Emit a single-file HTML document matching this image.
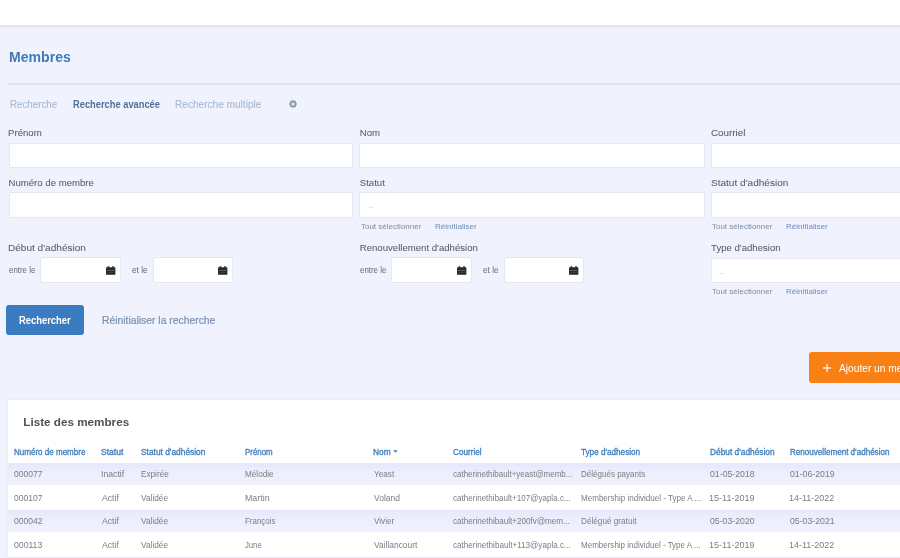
<!DOCTYPE html>
<html><head><meta charset="utf-8">
<style>
*{box-sizing:border-box;margin:0;padding:0}
html,body{width:900px;height:558px;overflow:hidden;background:#f0f3fd;font-family:"Liberation Sans",sans-serif;position:relative}
.abs{position:absolute;white-space:nowrap;transform-origin:0 50%;line-height:1.15}
#wrap{position:absolute;left:0;top:0;width:930px;height:590px;overflow:hidden;filter:blur(0.35px)}
.inp{position:absolute;background:#fff;border:1px solid #e5e8f2;border-radius:1px}
</style></head><body>
<div id="wrap">
<div style="position:absolute;left:0;top:0;width:930px;height:25.5px;background:#fff;border-bottom:1.5px solid #e0e3ee;box-shadow:0 1.5px 2px rgba(40,50,120,0.05)"></div>
<div style="position:absolute;left:8px;top:83.2px;width:922px;height:1.7px;background:#e1e4f0"></div>
<svg style="position:absolute;left:288.5px;top:100px" width="8" height="8" viewBox="0 0 8 8"><g fill="#8b9fae"><circle cx="4" cy="4" r="2.9"/><rect x="3.2" y="0" width="1.6" height="8" transform="rotate(0 4 4)"/><rect x="3.2" y="0" width="1.6" height="8" transform="rotate(45 4 4)"/><rect x="3.2" y="0" width="1.6" height="8" transform="rotate(90 4 4)"/><rect x="3.2" y="0" width="1.6" height="8" transform="rotate(135 4 4)"/></g><circle cx="4" cy="4" r="1.5" fill="#e4ecf0"/></svg>
<div class="inp" style="left:8.8px;top:142.6px;width:344.4px;height:25.4px"></div>
<div class="inp" style="left:359px;top:142.6px;width:345.6px;height:25.4px"></div>
<div class="inp" style="left:710.8px;top:142.6px;width:345px;height:25.4px"></div>
<div class="inp" style="left:8.8px;top:192.4px;width:344.4px;height:25.4px"></div>
<div class="inp" style="left:359px;top:192.4px;width:345.6px;height:25.4px"></div>
<div class="inp" style="left:710.8px;top:192.4px;width:345px;height:25.4px"></div>
<div class="inp" style="left:40.1px;top:257.3px;width:80.7px;height:25.5px"></div>
<div class="inp" style="left:153px;top:257.3px;width:80px;height:25.5px"></div>
<svg style="position:absolute;left:105.6px;top:266px" width="10" height="9" viewBox="0 0 10 9"><rect x="0" y="1.2" width="9.4" height="7.6" rx="0.6" fill="#2a2a2e"/><rect x="1.6" y="0.2" width="1.6" height="1.6" fill="#2a2a2e"/><rect x="6.2" y="0.2" width="1.6" height="1.6" fill="#2a2a2e"/><rect x="1" y="4.3" width="7.4" height="0.7" fill="#6d6d72"/><rect x="1" y="6.5" width="7.4" height="0.5" fill="#4a4a4e"/></svg>
<svg style="position:absolute;left:217.8px;top:266px" width="10" height="9" viewBox="0 0 10 9"><rect x="0" y="1.2" width="9.4" height="7.6" rx="0.6" fill="#2a2a2e"/><rect x="1.6" y="0.2" width="1.6" height="1.6" fill="#2a2a2e"/><rect x="6.2" y="0.2" width="1.6" height="1.6" fill="#2a2a2e"/><rect x="1" y="4.3" width="7.4" height="0.7" fill="#6d6d72"/><rect x="1" y="6.5" width="7.4" height="0.5" fill="#4a4a4e"/></svg>
<div class="inp" style="left:391.1px;top:257.3px;width:80.7px;height:25.5px"></div>
<div class="inp" style="left:504px;top:257.3px;width:80px;height:25.5px"></div>
<svg style="position:absolute;left:456.6px;top:266px" width="10" height="9" viewBox="0 0 10 9"><rect x="0" y="1.2" width="9.4" height="7.6" rx="0.6" fill="#2a2a2e"/><rect x="1.6" y="0.2" width="1.6" height="1.6" fill="#2a2a2e"/><rect x="6.2" y="0.2" width="1.6" height="1.6" fill="#2a2a2e"/><rect x="1" y="4.3" width="7.4" height="0.7" fill="#6d6d72"/><rect x="1" y="6.5" width="7.4" height="0.5" fill="#4a4a4e"/></svg>
<svg style="position:absolute;left:568.8px;top:266px" width="10" height="9" viewBox="0 0 10 9"><rect x="0" y="1.2" width="9.4" height="7.6" rx="0.6" fill="#2a2a2e"/><rect x="1.6" y="0.2" width="1.6" height="1.6" fill="#2a2a2e"/><rect x="6.2" y="0.2" width="1.6" height="1.6" fill="#2a2a2e"/><rect x="1" y="4.3" width="7.4" height="0.7" fill="#6d6d72"/><rect x="1" y="6.5" width="7.4" height="0.5" fill="#4a4a4e"/></svg>
<div class="inp" style="left:711px;top:257.6px;width:345px;height:25.8px"></div>
<div style="position:absolute;left:368.5px;top:206.8px;width:4px;height:1px;background:#e4e5ea"></div>
<div style="position:absolute;left:720px;top:273.3px;width:4px;height:1px;background:#e4e5ea"></div>
<div style="position:absolute;left:6px;top:305px;width:78px;height:29.5px;background:#3b7cc0;border-radius:3px"></div>
<div style="position:absolute;left:809px;top:352px;width:130px;height:30.5px;background:#f98015;border-radius:3px"></div>
<svg style="position:absolute;left:822.5px;top:364px" width="8" height="8"><rect x="3.4" y="0" width="1.2" height="8" fill="#fff"/><rect x="0" y="3.4" width="8" height="1.2" fill="#fff"/></svg>
<div style="position:absolute;left:8.3px;top:399.7px;width:900px;height:157.3px;background:#fff;box-shadow:0 0 4px rgba(60,70,140,0.06)"></div>
<div style="position:absolute;left:8.3px;top:556.6px;width:900px;height:1.4px;background:#e6eaf6"></div>
<div style="position:absolute;left:8.3px;top:462.8px;width:900px;height:22.4px;background:linear-gradient(#e5e8fa,#ebeefc 40%,#f0f2fd)"></div>
<div style="position:absolute;left:8.3px;top:509.5px;width:900px;height:22.5px;background:linear-gradient(#e5e8fa,#ebeefc 40%,#f0f2fd)"></div>
<svg style="position:absolute;left:392.8px;top:450px" width="5" height="4"><path d="M0.2 0.3 L4.6 0.3 L2.4 2.8 Z" fill="#3f78b4"/></svg>
<div class="abs" id="t0" style="left:9.01px;top:48.8px;font-size:14px;font-weight:bold;color:#4179b6;transform:scaleX(1.0050)">Membres</div>
<div class="abs" id="t1" style="left:9.79px;top:99px;font-size:10px;color:#aabad2;-webkit-text-stroke:0.15px #aabad2;transform:scaleX(0.9739)">Recherche</div>
<div class="abs" id="t2" style="left:72.87px;top:99px;font-size:10.3px;font-weight:bold;color:#50709a;transform:scaleX(0.9043)">Recherche avancée</div>
<div class="abs" id="t3" style="left:174.77px;top:99px;font-size:10px;color:#aabad2;-webkit-text-stroke:0.15px #aabad2;transform:scaleX(1.0089)">Recherche multiple</div>
<div class="abs" id="t4" style="left:8.35px;top:127px;font-size:9.6px;color:#5b5c60;-webkit-text-stroke:0.05px #5b5c60;transform:scaleX(1.0048)">Prénom</div>
<div class="abs" id="t5" style="left:359.75px;top:127px;font-size:9.6px;color:#5b5c60;-webkit-text-stroke:0.05px #5b5c60">Nom</div>
<div class="abs" id="t6" style="left:710.95px;top:127px;font-size:9.6px;color:#5b5c60;-webkit-text-stroke:0.05px #5b5c60;transform:scaleX(1.0238)">Courriel</div>
<div class="abs" id="t7" style="left:8.54px;top:177px;font-size:9.6px;color:#5b5c60;-webkit-text-stroke:0.05px #5b5c60">Numéro de membre</div>
<div class="abs" id="t8" style="left:359.79px;top:177px;font-size:9.6px;color:#5b5c60;-webkit-text-stroke:0.05px #5b5c60">Statut</div>
<div class="abs" id="t9" style="left:710.77px;top:177px;font-size:9.6px;color:#5b5c60;-webkit-text-stroke:0.05px #5b5c60;transform:scaleX(1.0472)">Statut d'adhésion</div>
<div class="abs" id="t10" style="left:360.65px;top:221.8px;font-size:8px;color:#7d8ba3;transform:scaleX(0.9969)">Tout sélectionner</div>
<div class="abs" id="t11" style="left:434.81px;top:221.8px;font-size:8px;color:#6b8bbd;transform:scaleX(1.0082)">Réinitialiser</div>
<div class="abs" id="t12" style="left:711.65px;top:221.8px;font-size:8px;color:#7d8ba3;transform:scaleX(0.9969)">Tout sélectionner</div>
<div class="abs" id="t13" style="left:785.81px;top:221.8px;font-size:8px;color:#6b8bbd;transform:scaleX(1.0082)">Réinitialiser</div>
<div class="abs" id="t14" style="left:8.40px;top:242px;font-size:9.6px;color:#5b5c60;-webkit-text-stroke:0.05px #5b5c60;transform:scaleX(1.0477)">Début d'adhésion</div>
<div class="abs" id="t15" style="left:359.75px;top:242px;font-size:9.6px;color:#5b5c60;-webkit-text-stroke:0.05px #5b5c60">Renouvellement d'adhésion</div>
<div class="abs" id="t16" style="left:711.05px;top:242px;font-size:9.6px;color:#5b5c60;-webkit-text-stroke:0.05px #5b5c60">Type d'adhesion</div>
<div class="abs" id="t17" style="left:9.43px;top:265.6px;font-size:8.4px;color:#6a6b70;transform:scaleX(0.9424)">entre le</div>
<div class="abs" id="t18" style="left:132.03px;top:265.6px;font-size:8.4px;color:#6a6b70;transform:scaleX(0.9926)">et le</div>
<div class="abs" id="t19" style="left:360.43px;top:265.6px;font-size:8.4px;color:#6a6b70;transform:scaleX(0.9424)">entre le</div>
<div class="abs" id="t20" style="left:483.03px;top:265.6px;font-size:8.4px;color:#6a6b70;transform:scaleX(0.9926)">et le</div>
<div class="abs" id="t21" style="left:711.65px;top:287.3px;font-size:8px;color:#7d8ba3;transform:scaleX(0.9969)">Tout sélectionner</div>
<div class="abs" id="t22" style="left:785.81px;top:287.3px;font-size:8px;color:#6b8bbd;transform:scaleX(1.0082)">Réinitialiser</div>
<div class="abs" id="t23" style="left:19.24px;top:314.6px;font-size:10px;font-weight:bold;color:#fff;transform:scaleX(0.9377)">Rechercher</div>
<div class="abs" id="t24" style="left:102.17px;top:314.6px;font-size:10px;color:#7b90ae;-webkit-text-stroke:0.2px #7b90ae;transform:scaleX(1.0350)">Réinitialiser la recherche</div>
<div class="abs" id="t25" style="left:838.55px;top:362px;font-size:10.5px;color:#fff;transform:scaleX(0.97)">Ajouter un membre</div>
<div class="abs" id="t26" style="left:23.26px;top:415px;font-size:11.7px;font-weight:bold;color:#4f5157">Liste des membres</div>
<div class="abs" id="t27" style="left:13.99px;top:447.5px;font-size:8.3px;color:#3f7dbf;-webkit-text-stroke:0.3px #3f7dbf;transform:scaleX(0.9679)">Numéro de membre</div>
<div class="abs" id="t28" style="left:101.45px;top:447.5px;font-size:8.3px;color:#3f7dbf;-webkit-text-stroke:0.3px #3f7dbf;transform:scaleX(1.0270)">Statut</div>
<div class="abs" id="t29" style="left:141.26px;top:447.5px;font-size:8.3px;color:#3f7dbf;-webkit-text-stroke:0.3px #3f7dbf;transform:scaleX(1.0082)">Statut d'adhésion</div>
<div class="abs" id="t30" style="left:245.01px;top:447.5px;font-size:8.3px;color:#3f7dbf;-webkit-text-stroke:0.3px #3f7dbf;transform:scaleX(0.9530)">Prénom</div>
<div class="abs" id="t31" style="left:373.12px;top:447.5px;font-size:8.3px;color:#3f7dbf;-webkit-text-stroke:0.3px #3f7dbf">Nom</div>
<div class="abs" id="t32" style="left:453.12px;top:447.5px;font-size:8.3px;color:#3f7dbf;-webkit-text-stroke:0.3px #3f7dbf;transform:scaleX(0.9841)">Courriel</div>
<div class="abs" id="t33" style="left:581.26px;top:447.5px;font-size:8.3px;color:#3f7dbf;-webkit-text-stroke:0.3px #3f7dbf;transform:scaleX(0.9823)">Type d'adhesion</div>
<div class="abs" id="t34" style="left:709.97px;top:447.5px;font-size:8.3px;color:#3f7dbf;-webkit-text-stroke:0.3px #3f7dbf;transform:scaleX(1.0046)">Début d'adhésion</div>
<div class="abs" id="t35" style="left:789.59px;top:447.5px;font-size:8.3px;color:#3f7dbf;-webkit-text-stroke:0.3px #3f7dbf;transform:scaleX(0.9736)">Renouvellement d'adhésion</div>
<div class="abs" id="t36" style="left:13.99px;top:469.0px;font-size:9px;color:#7c7d81;transform:scaleX(0.9472)">000077</div>
<div class="abs" id="t37" style="left:101.09px;top:469.0px;font-size:9px;color:#7c7d81;transform:scaleX(0.9634)">Inactif</div>
<div class="abs" id="t38" style="left:141.01px;top:469.0px;font-size:9px;color:#7c7d81;transform:scaleX(0.9088)">Expirée</div>
<div class="abs" id="t39" style="left:244.82px;top:469.0px;font-size:9px;color:#7c7d81;transform:scaleX(0.9053)">Mélodie</div>
<div class="abs" id="t40" style="left:373.73px;top:469.0px;font-size:9px;color:#7c7d81;transform:scaleX(0.9093)">Yeast</div>
<div class="abs" id="t41" style="left:453.00px;top:469.0px;font-size:9px;color:#7c7d81;transform:scaleX(0.8883)">catherinethibault+yeast@memb...</div>
<div class="abs" id="t42" style="left:580.81px;top:469.0px;font-size:9px;color:#7c7d81;transform:scaleX(0.8917)">Délégués payants</div>
<div class="abs" id="t43" style="left:709.99px;top:469.0px;font-size:9px;color:#7c7d81;transform:scaleX(0.9709)">01-05-2018</div>
<div class="abs" id="t44" style="left:789.59px;top:469.0px;font-size:9px;color:#7c7d81;transform:scaleX(0.9695)">01-06-2019</div>
<div class="abs" id="t45" style="left:13.99px;top:492.5px;font-size:9px;color:#7c7d81;transform:scaleX(0.9472)">000107</div>
<div class="abs" id="t46" style="left:102.08px;top:492.5px;font-size:9px;color:#7c7d81;transform:scaleX(0.9605)">Actif</div>
<div class="abs" id="t47" style="left:141.28px;top:492.5px;font-size:9px;color:#7c7d81;transform:scaleX(0.9221)">Validée</div>
<div class="abs" id="t48" style="left:244.78px;top:492.5px;font-size:9px;color:#7c7d81;transform:scaleX(0.9817)">Martin</div>
<div class="abs" id="t49" style="left:373.88px;top:492.5px;font-size:9px;color:#7c7d81;transform:scaleX(0.9410)">Voland</div>
<div class="abs" id="t50" style="left:453.00px;top:492.5px;font-size:9px;color:#7c7d81;transform:scaleX(0.8946)">catherinethibault+107@yapla.c...</div>
<div class="abs" id="t51" style="left:580.84px;top:492.5px;font-size:9px;color:#7c7d81;transform:scaleX(0.8943)">Membership individuel - Type A ...</div>
<div class="abs" id="t52" style="left:709.26px;top:492.5px;font-size:9px;color:#7c7d81;transform:scaleX(1.0049)">15-11-2019</div>
<div class="abs" id="t53" style="left:788.86px;top:492.5px;font-size:9px;color:#7c7d81;transform:scaleX(0.9958)">14-11-2022</div>
<div class="abs" id="t54" style="left:13.99px;top:516.0px;font-size:9px;color:#7c7d81;transform:scaleX(0.9530)">000042</div>
<div class="abs" id="t55" style="left:102.08px;top:516.0px;font-size:9px;color:#7c7d81;transform:scaleX(0.9605)">Actif</div>
<div class="abs" id="t56" style="left:141.28px;top:516.0px;font-size:9px;color:#7c7d81;transform:scaleX(0.9221)">Validée</div>
<div class="abs" id="t57" style="left:244.84px;top:516.0px;font-size:9px;color:#7c7d81;transform:scaleX(0.8837)">François</div>
<div class="abs" id="t58" style="left:373.86px;top:516.0px;font-size:9px;color:#7c7d81;transform:scaleX(0.9085)">Vivier</div>
<div class="abs" id="t59" style="left:453.00px;top:516.0px;font-size:9px;color:#7c7d81;transform:scaleX(0.8989)">catherinethibault+200fv@mem...</div>
<div class="abs" id="t60" style="left:580.81px;top:516.0px;font-size:9px;color:#7c7d81;transform:scaleX(0.9098)">Délégué gratuit</div>
<div class="abs" id="t61" style="left:709.99px;top:516.0px;font-size:9px;color:#7c7d81;transform:scaleX(0.9696)">05-03-2020</div>
<div class="abs" id="t62" style="left:789.59px;top:516.0px;font-size:9px;color:#7c7d81;transform:scaleX(0.9694)">05-03-2021</div>
<div class="abs" id="t63" style="left:13.99px;top:539.5px;font-size:9px;color:#7c7d81;transform:scaleX(0.9618)">000113</div>
<div class="abs" id="t64" style="left:102.08px;top:539.5px;font-size:9px;color:#7c7d81;transform:scaleX(0.9605)">Actif</div>
<div class="abs" id="t65" style="left:141.28px;top:539.5px;font-size:9px;color:#7c7d81;transform:scaleX(0.9221)">Validée</div>
<div class="abs" id="t66" style="left:244.93px;top:539.5px;font-size:9px;color:#7c7d81;transform:scaleX(0.8540)">June</div>
<div class="abs" id="t67" style="left:373.88px;top:539.5px;font-size:9px;color:#7c7d81;transform:scaleX(0.9349)">Vaillancourt</div>
<div class="abs" id="t68" style="left:453.00px;top:539.5px;font-size:9px;color:#7c7d81;transform:scaleX(0.9004)">catherinethibault+113@yapla.c...</div>
<div class="abs" id="t69" style="left:580.84px;top:539.5px;font-size:9px;color:#7c7d81;transform:scaleX(0.8899)">Membership individuel - Type A ...</div>
<div class="abs" id="t70" style="left:709.26px;top:539.5px;font-size:9px;color:#7c7d81;transform:scaleX(1.0049)">15-11-2019</div>
<div class="abs" id="t71" style="left:788.86px;top:539.5px;font-size:9px;color:#7c7d81;transform:scaleX(0.9958)">14-11-2022</div>
</div>
</body></html>
